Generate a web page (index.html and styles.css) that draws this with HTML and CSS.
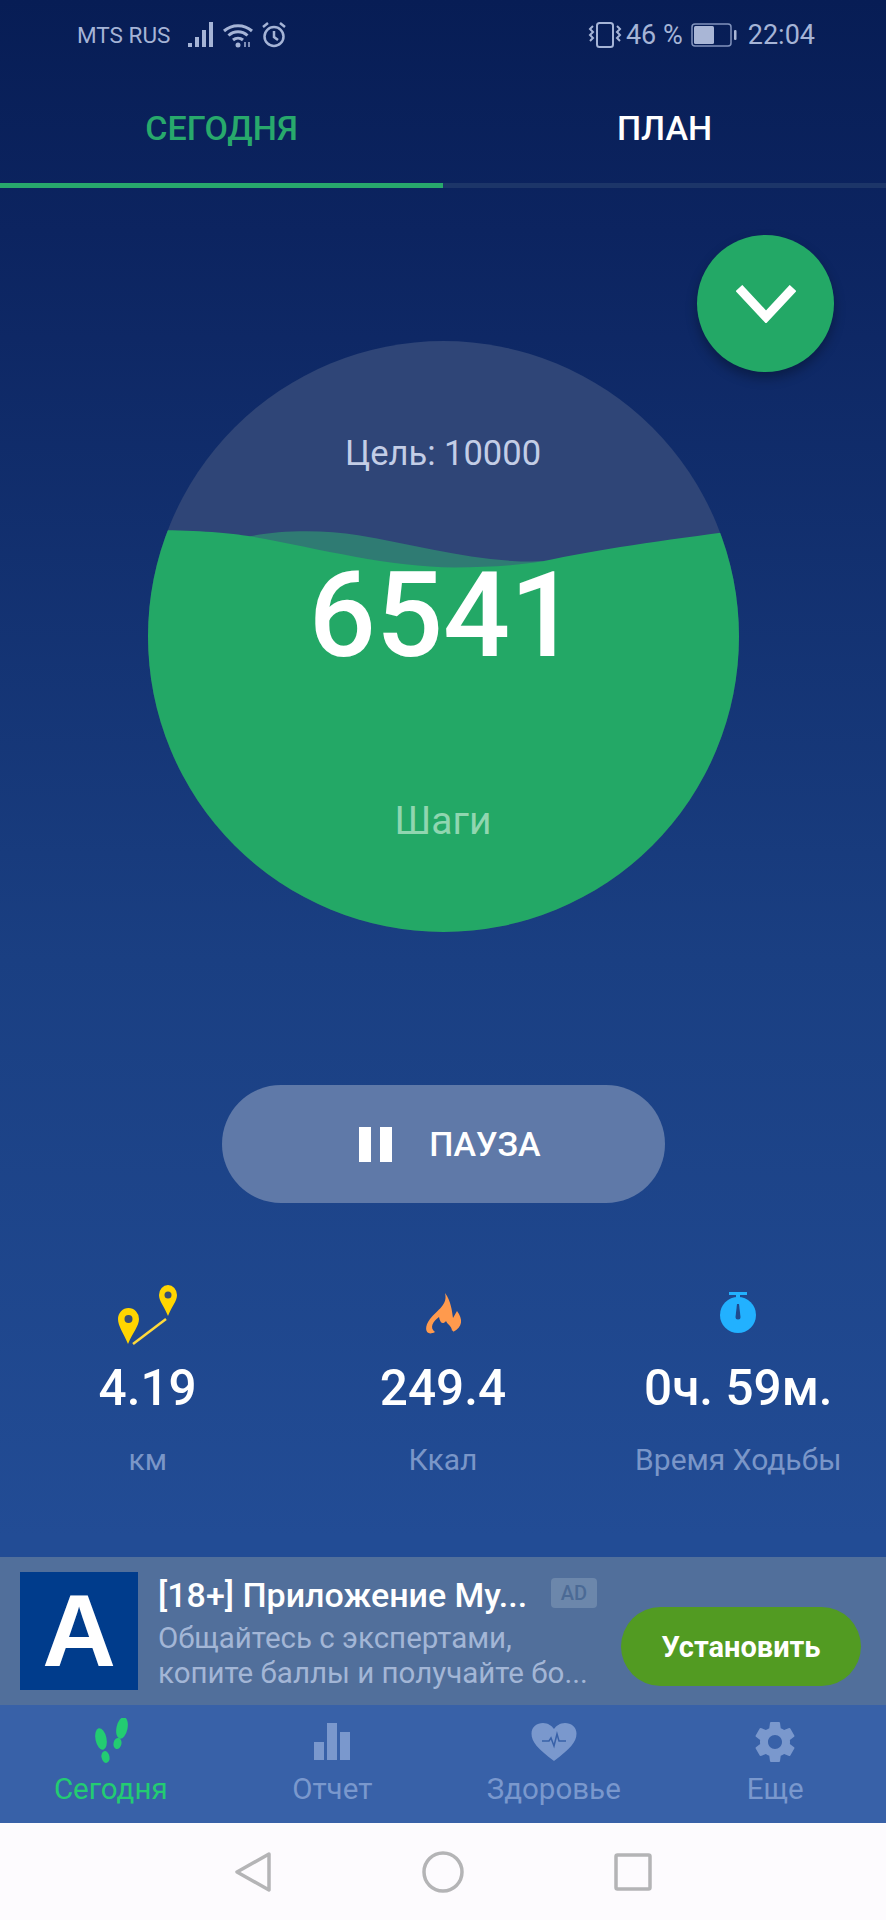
FILE: index.html
```html
<!DOCTYPE html>
<html lang="ru">
<head>
  <meta charset="UTF-8">
  <meta name="viewport" content="width=device-width, initial-scale=1.0">
  <link rel="stylesheet" href="styles.css">
</head>
<body>
  <div class="screen">
    <div class="status">
      <div class="status-side">
        <span class="carrier">MTS RUS</span>
        <svg class="ic-signal" viewBox="0 0 28 26"><path d="M0 21h4v4H0zM7 15h4v10H7zM14 8h4v17h-4zM21 0h4v25h-4z" fill="#a5b4d6"/></svg>
        <svg class="ic-wifi" viewBox="0 0 32 26" fill="none" stroke="#a5b4d6" stroke-width="3"><path d="M2 9c8-7 20-7 28 0M6.500 13.500c5.500-5 13.500-5 19 0M11 18c3-2.500 7-2.500 10 0"/><circle cx="16" cy="23" r="2.500" fill="#a5b4d6" stroke="none"/><path d="M23 20v5M27 20v5" stroke-width="1.500"/></svg>
        <svg class="ic-alarm" viewBox="0 0 26 26" fill="none" stroke="#a5b4d6" stroke-width="2.500"><circle cx="13" cy="14.500" r="9.500"/><path d="M13 9v6l4 3M2 5l5-4M24 5l-5-4"/></svg>
      </div>
      <div class="status-side">
        <svg class="ic-vibrate" viewBox="0 0 34 26" fill="none" stroke="#a5b4d6" stroke-width="2"><rect x="9" y="1" width="16" height="24" rx="2.500"/><path d="M5 4l-3 3 3 3-3 3 3 3-3 3M29 4l3 3-3 3 3 3-3 3 3 3"/></svg>
        <span class="status-text">46 %</span>
        <svg class="ic-battery" viewBox="0 0 46 24"><rect x="1" y="1" width="39" height="22" rx="3" fill="none" stroke="#8193bd" stroke-width="1.500"/><rect x="3" y="3" width="20" height="18" rx="1.500" fill="#a9b6d6"/><rect x="43" y="7" width="2.500" height="10" rx="1" fill="#a9b6d6"/></svg>
        <span class="status-text clock">22:04</span>
      </div>
    </div>

    <div class="tabs">
      <div class="tab tab-active">СЕГОДНЯ</div>
      <div class="tab">ПЛАН</div>
    </div>

    <div class="main">
      <button class="fab">
        <svg viewBox="0 0 60 38" fill="none" stroke="#fff" stroke-width="9"><path d="M3 3l27 29L57 3"/></svg>
      </button>

      <div class="gauge">
        <svg class="wave" viewBox="0 0 590 590">
          <path d="M102 195C130 189 175 188 210 194C270 204 330 222 394 220L394 260L102 260Z" fill="#2f7b73"/>
          <path d="M-10 189C40 188 80 191 102 195C170 207 240 226 306 226C340 226 370 224 394 220C450 208 520 198 600 188L600 600L-10 600Z" fill="#23a866"/>
        </svg>
        <div class="goal">Цель: 10000</div>
        <div class="count">6541</div>
        <div class="unit">Шаги</div>
      </div>

      <button class="pause">
        <span class="pause-bars"><i></i><i></i></span>
        <span>ПАУЗА</span>
      </button>

      <div class="stats">
        <div class="stat">
          <svg class="stat-ic" viewBox="0 0 76 62">
            <path d="M18 60C13 48 8 42 8 35a10.500 11 0 0 1 21 0C29 42 23 48 18 60Z" fill="#ffd500"/>
            <circle cx="18.500" cy="35" r="4" fill="#3a4f73"/>
            <path d="M58 32C54 22 49 17 49 11a9 10 0 0 1 18 0C67 17 62 22 58 32Z" fill="#ffd500"/>
            <circle cx="58" cy="11" r="3.500" fill="#3a4f73"/>
            <path d="M23 60L56 35" stroke="#ffd93a" stroke-width="2.500"/>
          </svg>
          <div class="stat-value">4.19</div>
          <div class="stat-label">км</div>
        </div>
        <div class="stat">
          <svg class="stat-ic" viewBox="0 0 76 62">
            <path d="M40 9C43 21 33 25 25 35C18 44 21 53 30 48C24 44 28 37 34 33C35 39 38 41 41 37C42 40 47 42 47 47C47 45 50 49 48 48C58 43 58 35 52 27L48 34C47 27 46 17 40 9Z" fill="#ff9a4d"/>
          </svg>
          <div class="stat-value">249.4</div>
          <div class="stat-label">Ккал</div>
        </div>
        <div class="stat">
          <svg class="stat-ic" viewBox="0 0 76 62">
            <path d="M29 8h18v3h-7v5h-4v-5h-7z" fill="#22b1ff"/>
            <circle cx="38" cy="31" r="18" fill="#22b1ff"/>
            <path d="M37 20h2l1.500 13a2.500 2.500 0 1 1-5 0z" fill="#1f4a8e"/>
          </svg>
          <div class="stat-value">0ч. 59м.</div>
          <div class="stat-label">Время Ходьбы</div>
        </div>
      </div>
    </div>

    <div class="ad">
      <div class="ad-logo">A</div>
      <div class="ad-body">
        <div class="ad-head">
          <span class="ad-title">[18+] Приложение Му...</span>
          <span class="ad-badge">AD</span>
        </div>
        <div class="ad-desc">Общайтесь с экспертами,<br>копите баллы и получайте бо...</div>
      </div>
      <button class="ad-btn">Установить</button>
    </div>

    <div class="nav">
      <div class="nav-item nav-active">
        <svg class="ic-feet" viewBox="0 0 48 48" fill="#23cc72">
          <ellipse cx="12" cy="21" rx="5.500" ry="11" transform="rotate(-12 12 21)"/>
          <ellipse cx="16.500" cy="39" rx="4" ry="6" transform="rotate(-12 16.500 39)"/>
          <ellipse cx="33" cy="10" rx="5.500" ry="11" transform="rotate(12 33 10)"/>
          <ellipse cx="28.500" cy="25.500" rx="4" ry="5.500" transform="rotate(12 28.500 25.500)"/>
        </svg>
        <span>Сегодня</span>
      </div>
      <div class="nav-item">
        <svg viewBox="0 0 48 48" fill="#7a98cd"><path d="M6 24h10v18H6zM19 5h10v37H19zM32 14h10v28H32z"/></svg>
        <span>Отчет</span>
      </div>
      <div class="nav-item">
        <svg viewBox="0 0 48 48"><path d="M24 43C8 31 1.500 24 1.500 15.500C1.500 9 7 5 13 5C18 5 22 8 24 11C26 8 30 5 35 5C41 5 46.500 9 46.500 15.500C46.500 24 40 31 24 43Z" fill="#7a98cd"/><path d="M12 23h7l2-3 3 8 3-12 2 7h7" fill="none" stroke="#3861a8" stroke-width="1.500"/></svg>
        <span>Здоровье</span>
      </div>
      <div class="nav-item">
        <svg viewBox="0 0 24 24" fill="#7a98cd"><path d="M19.430 12.980c.04-.32.07-.64.07-.98s-.03-.66-.07-.98l2.110-1.650c.19-.15.24-.42.12-.64l-2-3.460c-.12-.22-.39-.3-.61-.22l-2.490 1c-.52-.4-1.080-.73-1.690-.98l-.38-2.650C14.460 2.180 14.250 2 14 2h-4c-.25 0-.46.18-.49.420l-.38 2.650c-.61.25-1.170.59-1.690.98l-2.490-1c-.23-.09-.49 0-.61.220l-2 3.460c-.13.220-.07.490.12.640l2.110 1.650c-.04.32-.07.650-.07.980s.03.660.07.980l-2.110 1.650c-.19.150-.24.420-.12.640l2 3.460c.12.220.39.300.61.220l2.490-1c.52.400 1.080.730 1.690.980l.38 2.650c.03.240.24.420.49.420h4c.25 0 .46-.18.49-.42l.38-2.650c.61-.25 1.170-.59 1.690-.98l2.490 1c.23.090.49 0 .61-.22l2-3.460c.12-.22.07-.49-.12-.64l-2.110-1.650zM12 15.500c-1.930 0-3.500-1.570-3.500-3.500s1.570-3.500 3.500-3.500 3.500 1.570 3.500 3.500-1.570 3.500-3.500 3.500z"/></svg>
        <span>Еще</span>
      </div>
    </div>

    <div class="sysbar">
      <svg class="sys-back" viewBox="0 0 38 42" fill="none" stroke="#b4b4b6" stroke-width="3.500" stroke-linejoin="round"><path d="M35 3L3 21l32 18z"/></svg>
      <svg class="sys-home" viewBox="0 0 42 42" fill="none" stroke="#b4b4b6" stroke-width="3.500"><circle cx="21" cy="21" r="19"/></svg>
      <svg class="sys-recent" viewBox="0 0 38 38" fill="none" stroke="#b4b4b6" stroke-width="3.500" stroke-linejoin="round"><rect x="2" y="2" width="34" height="34" rx="1.500"/></svg>
    </div>
  </div>
</body>
</html>
```

FILE: styles.css
```css
* {
  box-sizing: border-box;
}

body {
  margin: 0;
  font-family: 'Roboto', sans-serif;
  background-color: #061c56;
}

button {
  border: none;
  font-family: inherit;
  padding: 0;
}

.screen {
  width: 886px;
  height: 1920px;
  display: flex;
  flex-direction: column;
  background: linear-gradient(180deg, #071d55 0%, #0c2460 12%, #1a3f82 50%, #224c95 80%);
  overflow: hidden;
}

/* status bar */
.status {
  height: 70px;
  padding: 0 71px 0 77px;
  display: flex;
  justify-content: space-between;
  align-items: center;
  color: #a5b4d6;
}

.status-side {
  display: flex;
  align-items: center;
}

.carrier {
  font-size: 22.500px;
}

.status-text {
  font-size: 27px;
}

.clock {
  margin-left: 11px;
}

.ic-signal {
  width: 28px;
  height: 26px;
  margin-left: 18px;
}

.ic-wifi {
  width: 32px;
  height: 26px;
  margin-left: 6px;
}

.ic-alarm {
  width: 26px;
  height: 26px;
  margin-left: 7px;
}

.ic-vibrate {
  width: 34px;
  height: 28px;
  margin-right: 4px;
}

.ic-battery {
  width: 46px;
  height: 24px;
  margin-left: 8px;
}

/* tabs */
.tabs {
  height: 118px;
  display: grid;
  grid-template-columns: 1fr 1fr;
}

.tab {
  display: flex;
  align-items: center;
  justify-content: center;
  padding-top: 2px;
  font-size: 34px;
  font-weight: 500;
  color: #fff;
  border-bottom: 5px solid #1c3568;
}

.tab-active {
  color: #28a96c;
  border-bottom-color: #28a96c;
}

/* main */
.main {
  flex: 1;
  position: relative;
  display: flex;
  flex-direction: column;
  align-items: center;
}

.fab {
  position: absolute;
  top: 47px;
  left: 697px;
  width: 137px;
  height: 137px;
  border-radius: 50%;
  background-color: #23a866;
  box-shadow: 0 6px 12px rgba(0, 0, 0, 0.3);
  display: flex;
  align-items: center;
  justify-content: center;
}

.fab svg {
  width: 60px;
  height: 38px;
}

.gauge {
  position: relative;
  width: 591px;
  height: 591px;
  margin-top: 153px;
  border-radius: 50%;
  overflow: hidden;
  background-color: #2f4577;
  display: flex;
  flex-direction: column;
  align-items: center;
}

.wave {
  position: absolute;
  top: 0;
  left: 0;
  width: 591px;
  height: 591px;
}

.goal,
.count,
.unit {
  position: relative;
}

.goal {
  margin-top: 92px;
  line-height: 40px;
  font-size: 34.500px;
  color: #c3cde6;
}

.count {
  margin-top: 78px;
  line-height: 130px;
  font-size: 118px;
  font-weight: 500;
  color: #fff;
}

.unit {
  margin-top: 120px;
  line-height: 40px;
  font-size: 39px;
  color: #90d6b0;
}

.pause {
  width: 443px;
  height: 118px;
  margin-top: 153px;
  padding-left: 14px;
  border-radius: 59px;
  background-color: #5f79a8;
  color: #fff;
  font-size: 34px;
  font-weight: 500;
  display: flex;
  align-items: center;
  justify-content: center;
  gap: 37px;
}

.pause-bars {
  display: flex;
  gap: 9px;
}

.pause-bars i {
  width: 12px;
  height: 35px;
  background-color: #fff;
}

.stats {
  width: 100%;
  margin-top: 81px;
  display: grid;
  grid-template-columns: repeat(3, 1fr);
}

.stat {
  display: flex;
  flex-direction: column;
  align-items: center;
}

.stat-ic {
  width: 76px;
  height: 62px;
}

.stat-value {
  margin-top: 14px;
  line-height: 56px;
  font-size: 49.500px;
  font-weight: 500;
  color: #fff;
}

.stat-label {
  margin-top: 26px;
  line-height: 36px;
  font-size: 30px;
  white-space: nowrap;
  color: #7a96c8;
}

/* ad */
.ad {
  height: 148px;
  padding: 15px 25px 15px 20px;
  display: flex;
  align-items: flex-start;
  background-color: #516f9b;
}

.ad-logo {
  width: 118px;
  height: 118px;
  background-color: #003c8c;
  color: #fff;
  font-family: 'Liberation Sans', sans-serif;
  font-size: 102px;
  font-weight: 700;
  line-height: 118px;
  text-align: center;
}

.ad-body {
  width: 483px;
  padding-left: 20px;
}

.ad-head {
  display: flex;
  align-items: flex-start;
}

.ad-title {
  width: 393px;
  line-height: 46px;
  font-size: 34px;
  font-weight: 500;
  color: #fff;
  white-space: nowrap;
}

.ad-badge {
  width: 46px;
  height: 30px;
  margin-top: 6px;
  border-radius: 4px;
  background-color: #6c87ab;
  color: #4b6a95;
  font-size: 20px;
  font-weight: 500;
  line-height: 30px;
  text-align: center;
}

.ad-desc {
  margin-top: 3px;
  line-height: 35px;
  font-size: 29.500px;
  color: #a3b6d6;
  white-space: nowrap;
}

.ad-btn {
  width: 240px;
  height: 79px;
  margin-top: 35px;
  border-radius: 40px;
  background-color: #529b22;
  color: #fff;
  font-size: 29px;
  font-weight: 700;
}

/* bottom nav */
.nav {
  height: 118px;
  display: grid;
  grid-template-columns: repeat(4, 1fr);
  background-color: #3861a8;
}

.nav-item {
  display: flex;
  flex-direction: column;
  align-items: center;
  padding-top: 13px;
  color: #7a98cd;
  font-size: 29.500px;
  line-height: 36px;
}

.nav-item svg {
  width: 48px;
  height: 48px;
  margin-bottom: 5px;
}

.nav-item .ic-feet {
  margin-left: 4px;
}

.nav-active {
  color: #23cc72;
}

/* android buttons */
.sysbar {
  height: 97px;
  background-color: #fdfbfe;
  display: flex;
  align-items: center;
  justify-content: center;
}

.sys-back {
  width: 38px;
  height: 42px;
}

.sys-home {
  width: 42px;
  height: 42px;
  margin-left: 150px;
}

.sys-recent {
  width: 38px;
  height: 38px;
  margin-left: 150px;
}
```
